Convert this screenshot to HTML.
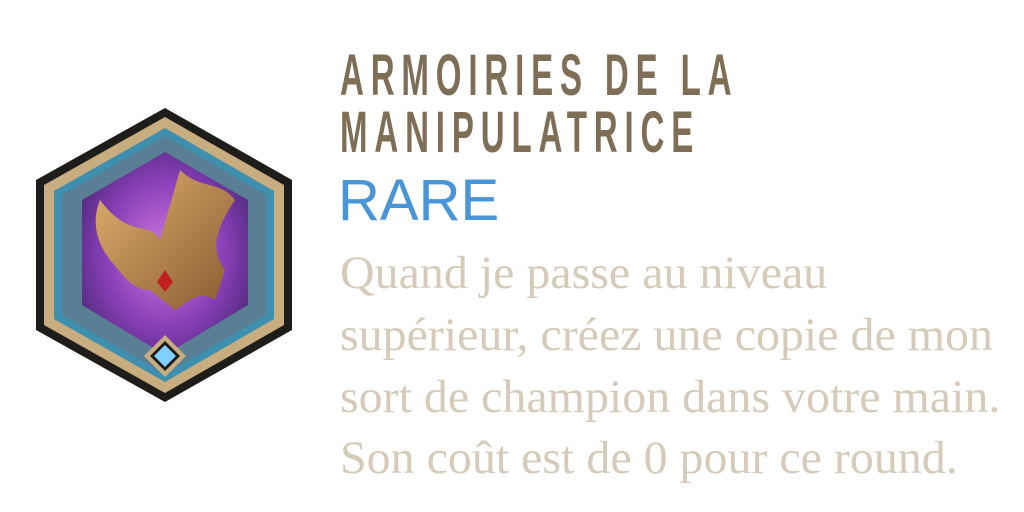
<!DOCTYPE html>
<html><head><meta charset="utf-8"><style>
html,body{margin:0;padding:0;background:#fff;width:1024px;height:512px;overflow:hidden;position:relative}
.t{position:absolute;left:340px;font-family:"Liberation Sans",sans-serif;font-weight:bold;font-size:58px;color:#7f6e56;letter-spacing:12px;transform:scaleX(0.57);transform-origin:0 0;white-space:nowrap;line-height:1}
.r{position:absolute;left:338px;top:172px;font-family:"Liberation Sans",sans-serif;font-size:58px;color:#4a94d8;line-height:1}
.b{position:absolute;left:340px;font-family:"Liberation Serif",serif;font-size:47px;color:#d6cbb9;white-space:nowrap;transform:scaleX(1.02);transform-origin:0 0;line-height:1}
</style></head><body>
<div class="t" style="top:47px">ARMOIRIES DE LA</div>
<div class="t" style="top:104px">MANIPULATRICE</div>
<div class="r">RARE</div>
<div class="b" style="top:250px">Quand je passe au niveau</div>
<div class="b" style="top:312px">supérieur, créez une copie de mon</div>
<div class="b" style="top:374px">sort de champion dans votre main.</div>
<div class="b" style="top:435px">Son coût est de 0 pour ce round.</div>
<svg style="position:absolute;left:0;top:0" width="330" height="420">
<defs>
<radialGradient id="p" cx="0.5" cy="0.5" r="0.6"><stop offset="0" stop-color="#d07ae0"/><stop offset="0.6" stop-color="#8a3fb8"/><stop offset="1" stop-color="#4d2a7a"/></radialGradient>
<linearGradient id="g" x1="0" y1="0" x2="1" y2="1"><stop offset="0" stop-color="#e0b070"/><stop offset="1" stop-color="#8a5a30"/></linearGradient>
</defs>
<polygon points="165,108 292,180 292,330 165,402 36,330 36,180" fill="#1f1d1a"/>
<polygon points="165,117 284,185 284,325 165,393 44,325 44,185" fill="#c8ad80"/>
<polygon points="165,128 274,191 274,319 165,382 54,319 54,191" fill="#3f8fae"/>
<polygon points="165,136 266,195 266,315 165,374 62,315 62,195" fill="#5a7f95"/>
<polygon points="165,152 248,200 248,305 165,355 82,305 82,200" fill="url(#p)"/>
<path d="M100,200 C130,240 150,220 160,240 L180,170 C200,190 220,180 235,200 C215,230 210,250 225,270 L215,300 C200,290 190,300 175,310 L150,290 C130,290 120,270 110,260 C95,240 92,220 100,200Z" fill="url(#g)"/>
<path d="M165,270 l8,12 l-8,10 l-8,-10z" fill="#c02020"/>
<polygon points="165,335 186,356 165,377 144,356" fill="#c8ad80"/>
<polygon points="165,341 180,356 165,371 150,356" fill="#1a1a1a"/>
<polygon points="165,345 176,356 165,367 154,356" fill="#7fd0ff"/>
</svg>
</body></html>
